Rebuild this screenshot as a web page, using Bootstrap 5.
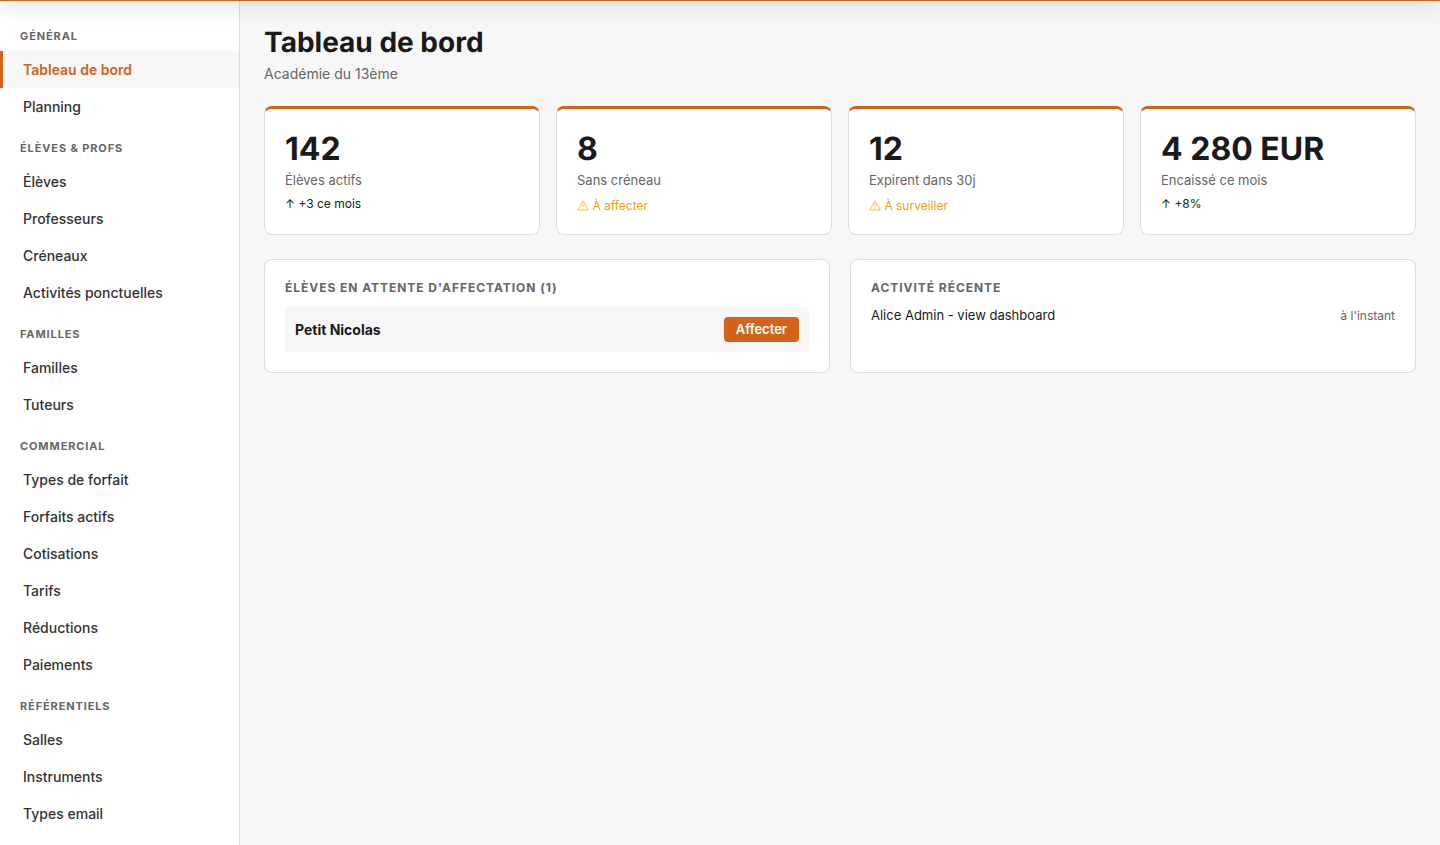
<!DOCTYPE html>
<html lang="fr">
<head>
<meta charset="utf-8">
<meta name="viewport" content="width=device-width, initial-scale=1">
<title>Tableau de bord</title>
<link rel="stylesheet" href="https://cdn.jsdelivr.net/npm/bootstrap@5.3.0/dist/css/bootstrap.min.css">
<style>
body{font-family:Inter,sans-serif;font-size:14px;line-height:1.5;color:#1a1a1a;background:#f7f7f7;height:100vh;overflow:hidden}
.topline{height:1px;background:#d4621a;position:relative;z-index:2}
.topline::before{content:"";position:absolute;left:0;right:0;bottom:0;height:60px;background:#d4621a;box-shadow:0 4px 24px rgba(0,0,0,.12)}
.side{width:240px;background:#fff;border-right:1px solid #ddd;padding-top:20px;overflow:hidden}
.side h6{font-size:11px;line-height:18px;height:30px;font-weight:700;letter-spacing:.88px;color:#666;padding:6px 20px 6px;margin:0}
.side .nav+h6{margin-top:8px}
.side .nav-link{height:37px;line-height:21px;padding:8px 20px;border-left:3px solid transparent;color:#333;font-weight:500;font-size:14px}
.side .nav-link.active{border-left-color:#d4621a;background:#f7f7f7;color:#d4621a;font-weight:600}
.page-title{font-size:28px;line-height:42px;font-weight:700;margin:0;text-rendering:geometricPrecision}
.muted{color:#666}
.panel{background:#fff;border:1px solid #ddd;border-radius:8px;padding:20px}
.stat{border-top:3px solid #d4621a;height:129px}
.stats{display:grid;grid-template-columns:repeat(4,1fr);gap:16px;margin-top:22px}
.value{font-size:32px;line-height:40px;font-weight:700;text-rendering:geometricPrecision}
.caption{font-size:13px;line-height:20px;margin-top:1px}
.trend{font-size:12px;line-height:18px;margin-top:5px}
.trend.warn{color:#f59e0b;line-height:22px}
.trend svg{width:12px;height:11px;vertical-align:-1px}
.panels{display:grid;grid-template-columns:1fr 1fr;gap:20px;margin-top:24px}
.panels .panel{height:114px}
.panel h2{font-size:12px;line-height:15px;font-weight:700;letter-spacing:.96px;color:#666;margin:0 0 12px}
.waiting{background:#f7f7f7;border-radius:4px;height:45px;padding:0 10px}
.recent{font-size:13px;line-height:16px}
.when{font-size:12px;line-height:18px}
.btn-assign{background:#d4621a;color:#fff;font-size:13px;font-weight:600;line-height:17px;padding:4px 12px;border:0;border-radius:4px}
</style>
</head>
<body>
<div class="topline"></div>
<div class="d-flex h-100">
<aside class="side flex-shrink-0">
<h6>GÉNÉRAL</h6>
<nav class="nav flex-column"><a class="nav-link active" href="#">Tableau de bord</a><a class="nav-link" href="#">Planning</a></nav>
<h6>ÉLÈVES &amp; PROFS</h6>
<nav class="nav flex-column"><a class="nav-link" href="#">Élèves</a><a class="nav-link" href="#">Professeurs</a><a class="nav-link" href="#">Créneaux</a><a class="nav-link" href="#">Activités ponctuelles</a></nav>
<h6>FAMILLES</h6>
<nav class="nav flex-column"><a class="nav-link" href="#">Familles</a><a class="nav-link" href="#">Tuteurs</a></nav>
<h6>COMMERCIAL</h6>
<nav class="nav flex-column"><a class="nav-link" href="#">Types de forfait</a><a class="nav-link" href="#">Forfaits actifs</a><a class="nav-link" href="#">Cotisations</a><a class="nav-link" href="#">Tarifs</a><a class="nav-link" href="#">Réductions</a><a class="nav-link" href="#">Paiements</a></nav>
<h6>RÉFÉRENTIELS</h6>
<nav class="nav flex-column"><a class="nav-link" href="#">Salles</a><a class="nav-link" href="#">Instruments</a><a class="nav-link" href="#">Types email</a></nav>
</aside>
<main class="flex-grow-1 px-4">
<header class="pt-3 mt-1"><h1 class="page-title">Tableau de bord</h1><div class="muted">Académie du 13ème</div></header>
<section class="stats">
<div class="panel stat"><div class="value">142</div><div class="caption muted">Élèves actifs</div><div class="trend">↑ +3 ce mois</div></div>
<div class="panel stat"><div class="value">8</div><div class="caption muted">Sans créneau</div><div class="trend warn"><svg viewBox="0 0 12 11" fill="none" stroke="currentColor" stroke-width=".7"><path d="M6 .9 11.2 10H.8Z"/><path d="M6 3.8V7.2M6 8V8.8"/></svg> À affecter</div></div>
<div class="panel stat"><div class="value">12</div><div class="caption muted">Expirent dans 30j</div><div class="trend warn"><svg viewBox="0 0 12 11" fill="none" stroke="currentColor" stroke-width=".7"><path d="M6 .9 11.2 10H.8Z"/><path d="M6 3.8V7.2M6 8V8.8"/></svg> À surveiller</div></div>
<div class="panel stat"><div class="value">4 280 EUR</div><div class="caption muted">Encaissé ce mois</div><div class="trend">↑ +8%</div></div>
</section>
<section class="panels">
<div class="panel"><h2>ÉLÈVES EN ATTENTE D'AFFECTATION (1)</h2><div class="waiting d-flex align-items-center justify-content-between"><strong class="fw-bold">Petit Nicolas</strong><button class="btn btn-assign">Affecter</button></div></div>
<div class="panel"><h2>ACTIVITÉ RÉCENTE</h2><div class="recent d-flex justify-content-between align-items-start"><span>Alice Admin - view dashboard</span><span class="muted when">à l'instant</span></div></div>
</section>
</main>
</div>
<script src="https://cdn.jsdelivr.net/npm/bootstrap@5.3.0/dist/js/bootstrap.bundle.min.js"></script>
</body>
</html>
